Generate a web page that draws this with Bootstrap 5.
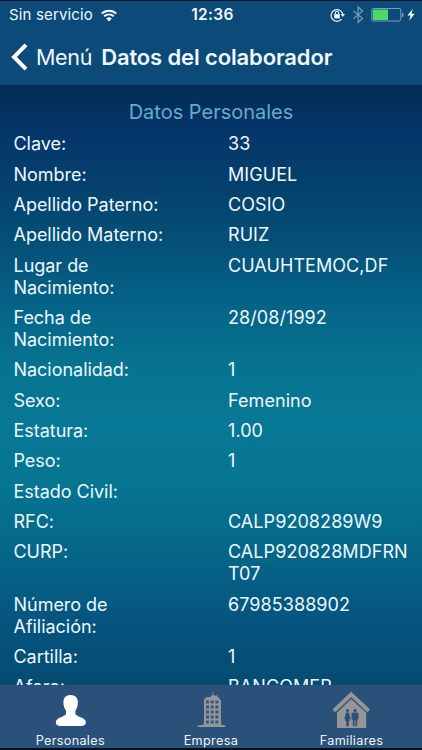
<!DOCTYPE html>
<html lang="es">
<head>
<meta charset="utf-8">
<meta name="viewport" content="width=device-width, initial-scale=1">
<title>Datos del colaborador</title>
<link rel="stylesheet" href="https://cdn.jsdelivr.net/npm/bootstrap@5.3.0/dist/css/bootstrap.min.css">
<style>
body{font-family:Inter,"Liberation Sans",sans-serif;color:#eef8ff;background:#020b18}
.app-shell{height:750px;border-top:1px solid #031329;border-bottom:2px solid #06101c}
.app-top{height:84px;background:#0c4a79}
.status-line{height:28px;font-size:15px;padding:0 6px 0 9px}
.status-side{width:42%}
.carrier{font-size:15px;letter-spacing:.15px}
.clock{font-size:15.5px;font-weight:600;letter-spacing:.35px}
.title-line{height:56px;padding-left:11px;font-size:21.5px}
.back-label{margin-left:8px;letter-spacing:-.3px}
.page-title{font-weight:600;margin-left:9px;font-size:22px;letter-spacing:-.13px}
.sheet{background:linear-gradient(#032d55 0,#04305f 4%,#05366a 8%,#05416d 17%,#055178 27%,#056287 36%,#067490 47%,#077895 56%,#067591 67%,#056386 80%,#055580 89%,#044b71 100%);min-height:0}
.section-title{color:#67abc9;font-size:20px;line-height:24px;padding-top:14.5px;margin-bottom:9.8px;letter-spacing:0}
.data-row{margin-bottom:8.35px;font-size:18px;line-height:22px;letter-spacing:.07px}
.data-key{width:228px;padding-left:13.5px;padding-right:70px;letter-spacing:-.03px}
.data-key.wide{padding-right:0}
.data-value{width:182px}
.tabs{height:63px;background:#295179}
.tab-item{width:140.6px;color:#eef5fc;font-size:12.7px;letter-spacing:.3px}
.tab-item svg{height:46px;width:50px;display:block;flex-shrink:0;margin-top:1px}
.tab-item span{line-height:16px;margin-top:1px}
</style>
<script src="https://cdn.jsdelivr.net/npm/bootstrap@5.3.0/dist/js/bootstrap.bundle.min.js"></script>
</head>
<body>
<div class="app-shell d-flex flex-column overflow-hidden">
<header class="app-top flex-shrink-0">
  <div class="status-line d-flex align-items-center justify-content-between">
    <div class="status-side d-flex align-items-center"><span class="carrier">Sin servicio</span>
      <svg class="ms-2" width="16" height="13" viewBox="0 0 16 13" fill="none" stroke="#fff" stroke-width="1.9"><path d="M.8 4.6a10.4 10.4 0 0 1 14.4 0M3.2 7.3a7 7 0 0 1 9.6 0"/><path d="M8 12.6 5.2 9.6a4.1 4.1 0 0 1 5.6 0z" fill="#fff" stroke="none"/></svg>
    </div>
    <div class="clock">12:36</div>
    <div class="status-side d-flex align-items-center justify-content-end">
      <svg width="86" height="20" viewBox="330 5 86 20" fill="none">
        <path d="M341.600 19.200a5.900 5.900 0 1 1 1.200-5" stroke="#e8f2fa" stroke-width="1.200"/><path d="m340.600 14 4.400 0-2.200 2.900z" fill="#e8f2fa"/>
        <rect x="334.200" y="14.200" width="5.600" height="4.200" fill="#fff"/><path d="M335.300 14.400v-1.200a1.700 1.700 0 0 1 3.400 0v1.200" stroke="#fff" stroke-width="1.100"/>
        <path d="m353.500 10.800 9 7.800-4.300 4V7l4.300 4-9 7.800" stroke="#7197b5" stroke-width="1.300"/>
        <rect x="371.800" y="8.500" width="29" height="12.500" rx="1.500" stroke="#7e9fb9"/><rect x="372.800" y="9.500" width="15.200" height="10.500" fill="#4cda64"/><path d="M402 12.500a2.800 2.800 0 0 1 0 5z" fill="#8ba8c0"/>
        <path d="m412.800 8.800-5.300 6.600h3.200l-1.500 5.300 5.500-7h-3.300z" fill="#fff"/>
      </svg>
    </div>
  </div>
  <div class="title-line d-flex align-items-center">
    <svg width="17" height="28" viewBox="0 0 17 28" fill="none" stroke="#fff" stroke-width="4"><path d="M15 1.800 3 14 15 26.200"/></svg>
    <span class="back-label">Menú</span><span class="page-title text-nowrap">Datos del colaborador</span>
  </div>
</header>
<main class="sheet flex-grow-1 overflow-hidden">
  <div class="section-title text-center">Datos Personales</div>
  <div class="data-row d-flex"><div class="data-key">Clave:</div><div class="data-value">33</div></div>
  <div class="data-row d-flex"><div class="data-key">Nombre:</div><div class="data-value">MIGUEL</div></div>
  <div class="data-row d-flex"><div class="data-key wide">Apellido Paterno:</div><div class="data-value">COSIO</div></div>
  <div class="data-row d-flex"><div class="data-key wide">Apellido Materno:</div><div class="data-value">RUIZ</div></div>
  <div class="data-row d-flex"><div class="data-key">Lugar de<br>Nacimiento:</div><div class="data-value">CUAUHTEMOC,DF</div></div>
  <div class="data-row d-flex"><div class="data-key">Fecha de<br>Nacimiento:</div><div class="data-value">28/08/1992</div></div>
  <div class="data-row d-flex"><div class="data-key">Nacionalidad:</div><div class="data-value">1</div></div>
  <div class="data-row d-flex"><div class="data-key">Sexo:</div><div class="data-value">Femenino</div></div>
  <div class="data-row d-flex"><div class="data-key">Estatura:</div><div class="data-value">1.00</div></div>
  <div class="data-row d-flex"><div class="data-key">Peso:</div><div class="data-value">1</div></div>
  <div class="data-row d-flex"><div class="data-key">Estado Civil:</div><div class="data-value"></div></div>
  <div class="data-row d-flex"><div class="data-key">RFC:</div><div class="data-value">CALP9208289W9</div></div>
  <div class="data-row d-flex"><div class="data-key">CURP:</div><div class="data-value text-nowrap">CALP920828MDFRN<br>T07</div></div>
  <div class="data-row d-flex"><div class="data-key">Número de<br>Afiliación:</div><div class="data-value">67985388902</div></div>
  <div class="data-row d-flex"><div class="data-key">Cartilla:</div><div class="data-value">1</div></div>
  <div class="data-row d-flex"><div class="data-key">Afore:</div><div class="data-value">BANCOMER</div></div>
</main>
<nav class="tabs d-flex flex-shrink-0">
  <div class="tab-item d-flex flex-column align-items-center">
    <svg viewBox="45 686 50 46"><path d="M70.500 695c5 0 7.400 3 7.400 7.500 0 3.500-1 6-2.500 8v3.200c0 3 10.500 3.300 10.500 8.600 0 2.500-2 3.700-5 3.700H60.500c-3 0-4.700-1.200-4.700-3.700 0-5.300 10.200-5.600 10.200-8.600v-3.200c-1.500-2-2.600-4.500-2.600-8 0-4.500 2.200-7.500 7.100-7.500z" fill="#fff"/></svg>
    <span>Personales</span>
  </div>
  <div class="tab-item d-flex flex-column align-items-center">
    <svg viewBox="185 686 50 46"><path d="M196.500 727v-1.200l6.500-1.300V698.500h2V697h5v-1.500h1.500V692h1v3.500h4v2h2v2.200l1.500.5v24.300l4.500 1.300v1.200z" fill="#959698"/>
    <path d="M205 700.500h3v3h-3zm4.700 0h3v3h-3zm4.700 0h3v3h-3zM205 705.500h3v3h-3zm4.700 0h3v3h-3zm4.700 0h3v3h-3zM205 710.500h3v3h-3zm4.700 0h3v3h-3zm4.700 0h3v3h-3zM205 715.500h3v3h-3zm4.700 0h3v3h-3zm4.700 0h3v3h-3zM205 720.500h3v3h-3zm4.700 0h3v3h-3zm4.700 0h3v3h-3z" fill="#36587a"/></svg>
    <span>Empresa</span>
  </div>
  <div class="tab-item d-flex flex-column align-items-center">
    <svg viewBox="325.500 686 50 46"><path d="m334.500 709.700 16.200-15.300 16.300 15.300" fill="none" stroke="#969697" stroke-width="4" stroke-linecap="round"/><path d="m336.500 712.700 14.200-13.800 15 13.800V728h-29.200z" fill="#969697"/><path d="m336.200 711.900 14.600-13.700 14.600 13.700" fill="none" stroke="#45617f" stroke-width=".7"/>
    <g fill="#295179"><circle cx="347" cy="710.500" r="1.600"/><circle cx="354.500" cy="710.500" r="1.600"/><path d="M345.500 712.500h3l1.700 6.500-1 .4-.8-2.400 1 4h-1.100v5.200h-2.600V721h-1.100l1-4-.8 2.400-1-.4zM352 712.500h5l1 1v6h-1.200v-4.500l-.2 11.200h-1.600v-6h-.9v6h-1.700l-.2-11.200v4.500H351v-6z"/></g></svg>
    <span>Familiares</span>
  </div>
</nav>
</div>
</body>
</html>
